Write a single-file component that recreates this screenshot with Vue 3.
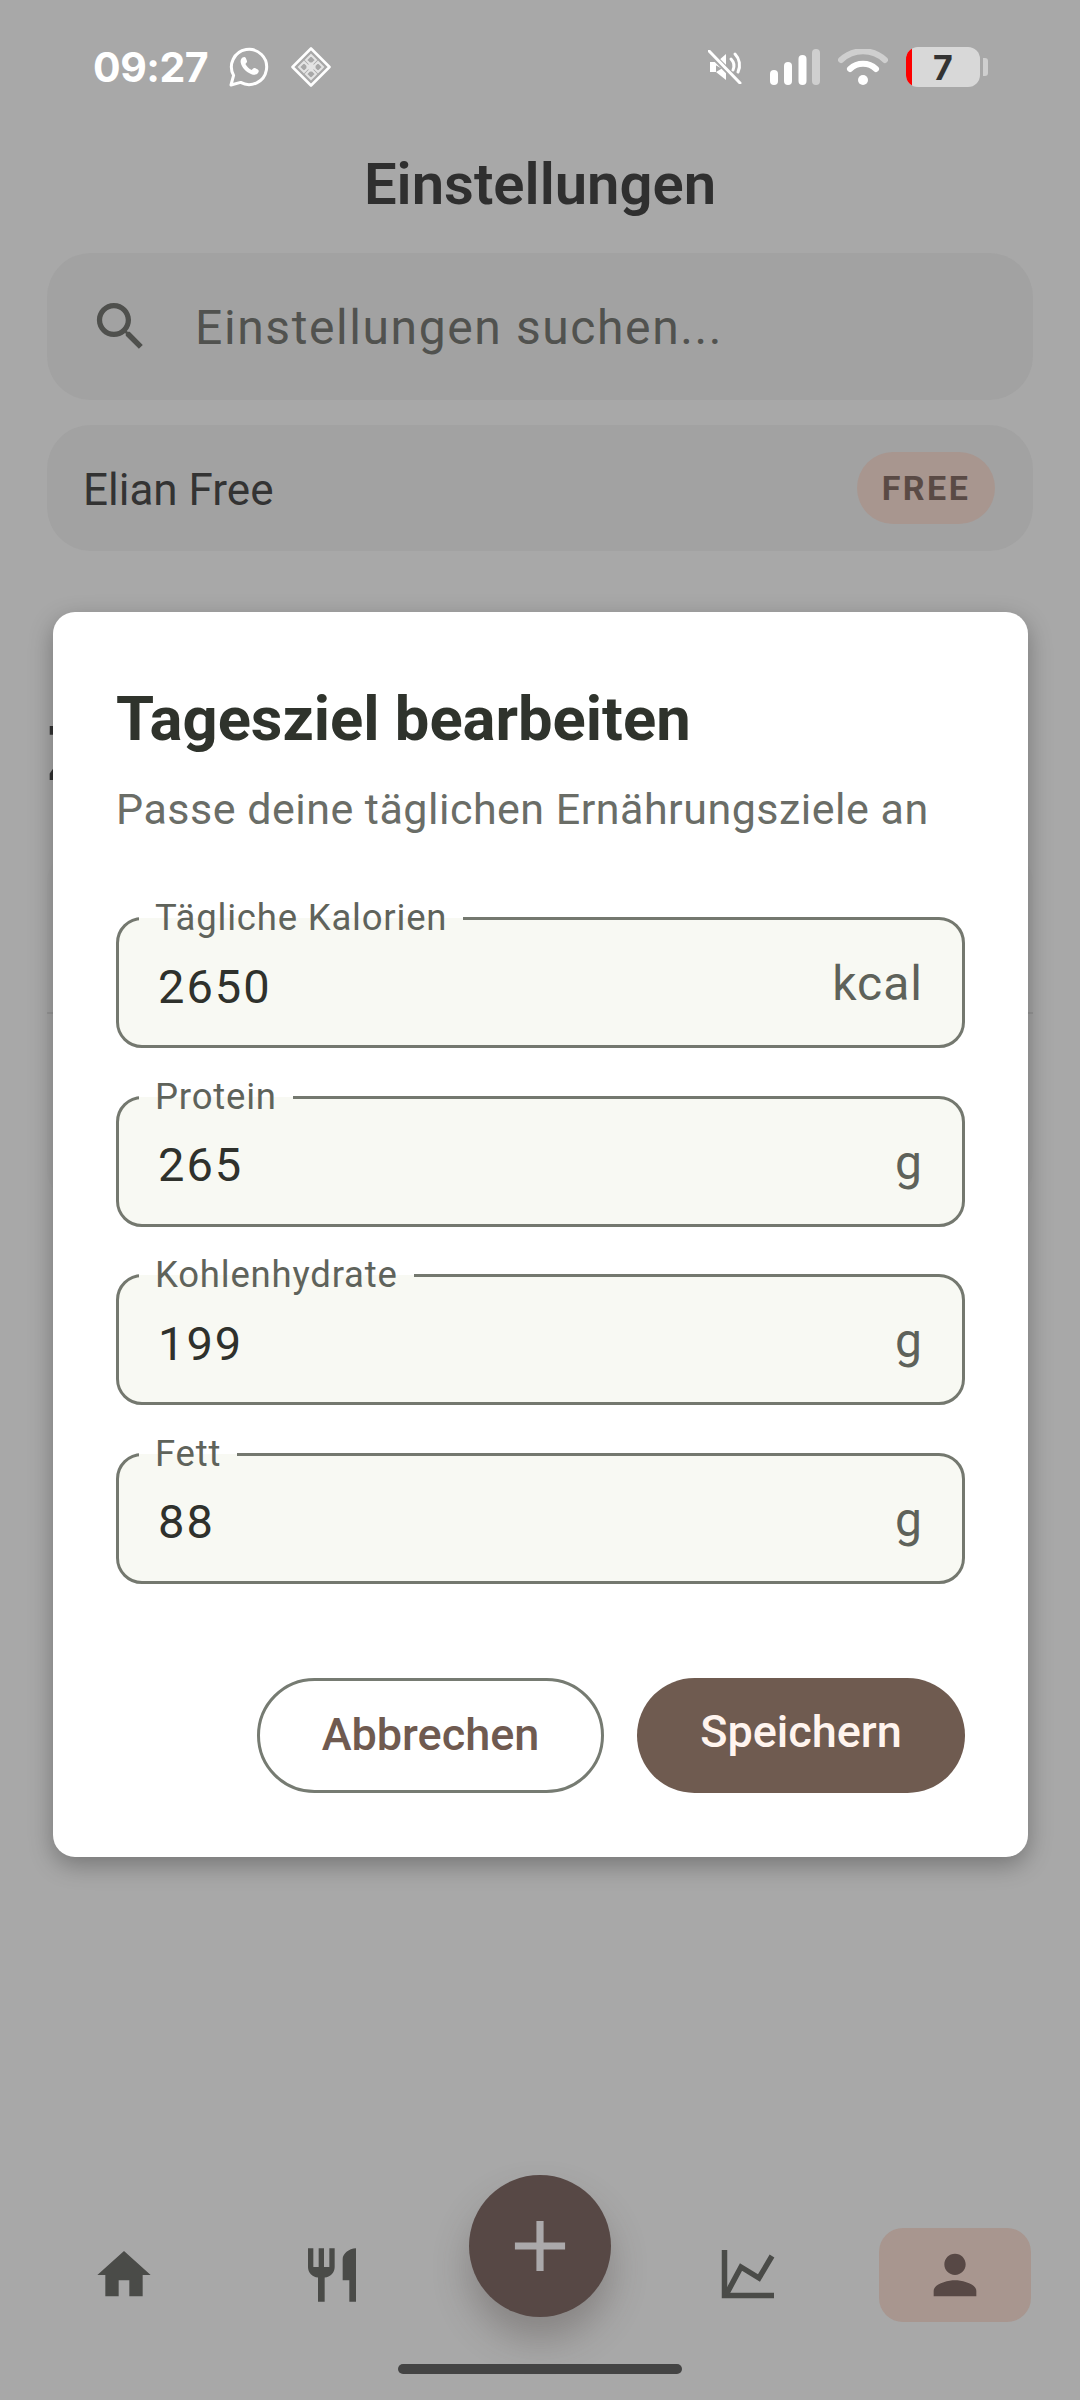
<script setup>
const goals = [
  { label: 'Tägliche Kalorien', value: '2650', unit: 'kcal' },
  { label: 'Protein', value: '265', unit: 'g' },
  { label: 'Kohlenhydrate', value: '199', unit: 'g' },
  { label: 'Fett', value: '88', unit: 'g' }
]
</script>

<template>
  <div class="page">
    <!-- status bar -->
    <div class="status">
      <span class="time">09:27</span>
      <svg class="whatsapp" width="40" height="40" viewBox="0 0 40 40">
        <path d="M2 38l2.600-9.600A17.600 17.600 0 1 1 11.600 35.400z" fill="none" stroke="#fff" stroke-width="3" stroke-linejoin="round" />
        <path d="M13.500 10.500c1.500-1 2.700-.8 3.300.6l1.100 2.700c.3.800 0 1.400-.5 2l-1 1.200c1.300 2.600 3.600 4.700 6.300 6l1.400-1.500c.5-.6 1.200-.7 1.900-.4l2.800 1.400c1.100.6 1.200 1.700.5 3-1.200 2.100-3.800 2.800-6.800 1.700-5.400-2-9.700-6.500-10.800-11.700-.4-2.100.4-3.900 1.800-5z" fill="#fff" />
      </svg>
      <svg class="diamond" width="40" height="40" viewBox="0 0 40 40">
        <path d="M20 1.500L38.500 20 20 38.500 1.500 20z" fill="none" stroke="#fff" stroke-width="2.600" stroke-linejoin="round" />
        <path d="M20 8l5 5-5 5-5-5zM8 20l5-5 5 5-5 5zM32 20l-5-5-5 5 5 5zM20 32l-5-5 5-5 5 5z" fill="none" stroke="#e4e4e4" stroke-width="2" />
        <path d="M20 15l5 5-5 5-5-5z" fill="#e4e4e4" />
      </svg>
      <div class="status-right">
        <svg class="mute" width="34" height="34" viewBox="0 0 34 34">
          <path d="M2 12h5l3-1 8-7v17z" fill="#fff" />
          <path d="M2 12h6v10H2zM8 22l10 8V16z" fill="#fff" />
          <path d="M2 3l29 29" stroke="#a8a8a8" stroke-width="6" />
          <path d="M1 1l31 32" stroke="#fff" stroke-width="3" stroke-linecap="round" />
          <path d="M23 9a10 10 0 0 1 2 11M27 4a16 16 0 0 1 3 18" fill="none" stroke="#fff" stroke-width="3" stroke-linecap="round" />
        </svg>
        <svg class="signal" width="50" height="36" viewBox="0 0 50 36">
          <rect x="0" y="21" width="8" height="15" rx="4" fill="#fff" />
          <rect x="14" y="13" width="8" height="23" rx="4" fill="#fff" />
          <rect x="28.500" y="6" width="8" height="30" rx="4" fill="#fff" />
          <rect x="42" y="0" width="8" height="36" rx="4" fill="#cfcfcf" />
        </svg>
        <svg class="wifi" width="50" height="36" viewBox="0 0 50 36">
          <path d="M3 11a32 32 0 0 1 44 0" fill="none" stroke="#cfcfcf" stroke-width="6" stroke-linecap="round" />
          <path d="M12 20a19 19 0 0 1 26 0" fill="none" stroke="#fff" stroke-width="6" stroke-linecap="round" />
          <circle cx="25" cy="31" r="5" fill="#fff" />
        </svg>
        <div class="battery">
          <span class="battery-low"></span>
          <span class="battery-num">7</span>
        </div>
        <span class="battery-nub"></span>
      </div>
    </div>

    <h1 class="title">Einstellungen</h1>

    <div class="search">
      <svg width="63" height="63" viewBox="0 0 24 24" fill="#4f504d">
        <path d="M15.500 14h-.79l-.28-.27C15.410 12.590 16 11.110 16 9.500 16 5.910 13.090 3 9.500 3S3 5.910 3 9.500 5.910 16 9.500 16c1.610 0 3.090-.59 4.230-1.570l.27.28v.79l5 4.990L20.490 19l-4.990-5zm-6 0C7.010 14 5 11.990 5 9.500S7.010 5 9.500 5 14 7.010 14 9.500 11.990 14 9.500 14z" />
      </svg>
      <span class="search-text">Einstellungen suchen...</span>
    </div>

    <div class="account">
      <span class="account-name">Elian Free</span>
      <span class="badge">FREE</span>
    </div>

    <!-- only a sliver shows beside the dialog -->
    <div class="behind-heading">Z</div>
    <div class="behind-card">
      <div class="behind-row"></div>
      <div class="behind-row"></div>
    </div>

    <div class="bottom">
      <nav class="nav">
        <div class="nav-item">
          <svg width="64" height="64" viewBox="0 0 24 24" fill="#4a4b48">
            <path d="M10 20v-6h4v6h5v-8h3L12 3 2 12h3v8z" />
          </svg>
        </div>
        <div class="nav-item">
          <svg width="64" height="64" viewBox="0 0 24 24" fill="#4a4b48">
            <path d="M11 9H9V2H7v7H5V2H3v7c0 2.120 1.660 3.840 3.750 3.970V22h2.500v-9.030C11.340 12.840 13 11.120 13 9V2h-2v7zm5-3v8h2.500v8H21V2c-2.760 0-5 2.240-5 4z" />
          </svg>
        </div>
        <div class="nav-item">
          <button class="fab">
            <svg width="86" height="86" viewBox="0 0 24 24" fill="#aba9ab">
              <path d="M19 13h-6v6h-2v-6H5v-2h6V5h2v6h6v2z" />
            </svg>
          </button>
        </div>
        <div class="nav-item">
          <svg width="64" height="64" viewBox="0 0 64 64" fill="none" stroke="#4a4b48" stroke-width="5.500">
            <path d="M8.500 7v45.500H58" />
            <path d="M10 52l15-28 18 11 13-22" />
          </svg>
        </div>
        <div class="nav-item">
          <div class="nav-active">
            <svg width="64" height="64" viewBox="0 0 24 24" fill="#574845">
              <path d="M12 12c2.210 0 4-1.790 4-4s-1.790-4-4-4-4 1.790-4 4 1.790 4 4 4zm0 2c-2.670 0-8 1.340-8 4v2h16v-2c0-2.660-5.330-4-8-4z" />
            </svg>
          </div>
        </div>
      </nav>
      <div class="home-bar"></div>
    </div>

    <!-- dialog -->
    <div class="dialog">
      <h2 class="dialog-title">Tagesziel bearbeiten</h2>
      <p class="dialog-sub">Passe deine täglichen Ernährungsziele an</p>
      <div class="fields">
        <div v-for="goal in goals" :key="goal.label" class="field">
          <span class="field-label">{{ goal.label }}</span>
          <span class="field-value">{{ goal.value }}</span>
          <span class="field-unit">{{ goal.unit }}</span>
        </div>
      </div>
      <div class="actions">
        <button class="btn btn-cancel">Abbrechen</button>
        <button class="btn btn-save">Speichern</button>
      </div>
    </div>
  </div>
</template>

<style>
html,
body {
  margin: 0;
  background: #a8a8a8;
}
</style>

<style scoped>
.page {
  position: relative;
  width: 1080px;
  height: 2400px;
  overflow: hidden;
  background: #a8a8a8;
  display: flex;
  flex-direction: column;
  font-family: Roboto, sans-serif;
  color: #333;
}

.status {
  height: 134px;
  flex: none;
  box-sizing: border-box;
  padding: 0 92px 0 93px;
  display: flex;
  align-items: center;
}

.time {
  font-family: Inter, sans-serif;
  font-weight: 700;
  font-size: 41px;
  letter-spacing: -0.5px;
  color: #fff;
}

.whatsapp {
  margin-left: 21px;
}

.diamond {
  margin-left: 22px;
}

.status-right {
  margin-left: auto;
  display: flex;
  align-items: center;
}

.signal {
  margin-left: 28px;
}

.wifi {
  margin-left: 18px;
}

.battery {
  width: 74px;
  height: 40px;
  margin-left: 18px;
  border-radius: 12px;
  overflow: hidden;
  background: #d8d8d8;
  display: flex;
  justify-content: center;
  align-items: center;
  position: relative;
}

.battery-low {
  position: absolute;
  left: 0;
  top: 0;
  bottom: 0;
  width: 6px;
  background: #fd0000;
}

.battery-num {
  font-weight: 700;
  font-size: 34px;
  font-family: Inter, sans-serif;
  color: #333;
}

.battery-nub {
  width: 5px;
  height: 18px;
  margin-left: 3px;
  border-radius: 0 3px 3px 0;
  background: #cfcfcf;
}

.title {
  margin: 16px 0 0;
  font-size: 58px;
  line-height: 68px;
  font-weight: 600;
  text-align: center;
  color: #2f2f2f;
}

.search {
  margin: 35px 47px 0;
  height: 147px;
  flex: none;
  border-radius: 44px;
  background: #a2a2a2;
  display: flex;
  align-items: center;
  padding-left: 42px;
  gap: 43px;
  font-size: 48px;
  letter-spacing: 1.600px;
  color: #51524f;
}

.search-text {
  padding-top: 2px;
}

.account {
  margin: 25px 47px 0;
  height: 126px;
  flex: none;
  box-sizing: border-box;
  border-radius: 44px;
  background: #a2a2a2;
  display: flex;
  align-items: center;
  justify-content: space-between;
  padding: 0 38px 0 36px;
  font-size: 44px;
  color: #333;
}

.account-name {
  padding-top: 4px;
}

.badge {
  width: 138px;
  height: 72px;
  border-radius: 36px;
  background: #a8968f;
  display: flex;
  align-items: center;
  justify-content: center;
  font-size: 34px;
  font-weight: 700;
  letter-spacing: 2.500px;
  color: #5a4a45;
}

.behind-heading {
  width: 6px;
  overflow: hidden;
  margin: 165px 0 0 47px;
  font-size: 76px;
  line-height: 76px;
  font-weight: 700;
  color: #333;
}

.behind-card {
  margin: 60px 47px 0;
  height: 348px;
  border-radius: 30px;
  background: #a6a6a6;
}

.behind-row {
  height: 160px;
  border-bottom: 2px solid #989898;
}

.behind-row + .behind-row {
  border-bottom: none;
}

.bottom {
  margin-top: auto;
  padding-bottom: 26px;
  display: flex;
  flex-direction: column;
  align-items: center;
}

.nav {
  width: 1040px;
  height: 94px;
  display: grid;
  grid-template-columns: repeat(5, 208px);
}

.nav-item {
  height: 94px;
  display: flex;
  align-items: center;
  justify-content: center;
}

.nav-active {
  width: 152px;
  height: 94px;
  margin-right: 2px;
  border-radius: 24px;
  background: #a8968f;
  display: flex;
  align-items: center;
  justify-content: center;
}

.fab {
  width: 142px;
  height: 142px;
  margin-bottom: 58px;
  flex: none;
  padding: 0;
  border: none;
  border-radius: 50%;
  background: #574845;
  box-shadow: 0 22px 36px rgba(60, 50, 45, 0.3);
  display: flex;
  align-items: center;
  justify-content: center;
}

.home-bar {
  width: 284px;
  height: 10px;
  margin-top: 42px;
  border-radius: 5px;
  background: #444;
}

.dialog {
  position: absolute;
  left: 53px;
  top: 612px;
  width: 975px;
  height: 1245px;
  box-sizing: border-box;
  padding: 72px 63px 0 63px;
  border-radius: 22px;
  background: #fff;
  box-shadow: 0 8px 24px rgba(0, 0, 0, 0.3);
}

.dialog-title {
  margin: 0;
  font-size: 61.500px;
  line-height: 70px;
  font-weight: 700;
  color: #2f332c;
}

.dialog-sub {
  margin: 27px 0 0;
  font-size: 43px;
  line-height: 56px;
  letter-spacing: 0.500px;
  color: #6a6d67;
}

.fields {
  margin-top: 80px;
  display: flex;
  flex-direction: column;
  gap: 47.500px;
}

.field {
  position: relative;
  height: 131px;
  box-sizing: border-box;
  padding: 0 39px;
  border: 3px solid #74786f;
  border-radius: 26px;
  background: #f8f9f3;
  display: flex;
  align-items: center;
  justify-content: space-between;
}

.field-label {
  position: absolute;
  left: 20px;
  top: -24px;
  padding: 0 16px;
  font-size: 36.500px;
  line-height: 44px;
  letter-spacing: 0.800px;
  color: #5f635b;
  background: linear-gradient(#fff 50%, #f8f9f3 50%);
}

.field-value {
  padding-top: 7px;
  font-size: 47px;
  letter-spacing: 2px;
  color: #2f312c;
}

.field-unit {
  padding-top: 2px;
  font-size: 48px;
  letter-spacing: 1px;
  color: #5e625a;
}

.actions {
  margin-top: 94px;
  display: flex;
  justify-content: flex-end;
  gap: 33px;
}

.btn {
  height: 115px;
  box-sizing: border-box;
  border-radius: 58px;
  font-family: Roboto, sans-serif;
  font-size: 45px;
  font-weight: 500;
}

.btn-cancel {
  width: 347px;
  background: #fff;
  border: 3px solid #767b72;
  color: #6f5a50;
  padding-bottom: 3px;
}

.btn-save {
  width: 328px;
  border: none;
  background: #6f5b50;
  color: #fff4ee;
  padding-bottom: 9px;
}
</style>
